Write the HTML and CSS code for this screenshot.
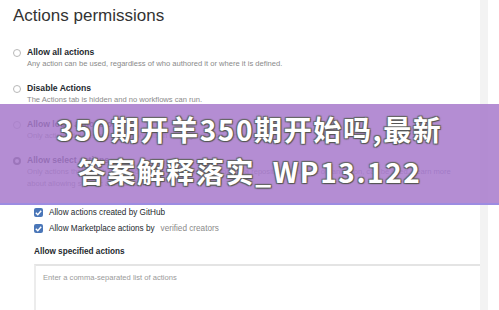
FILE: index.html
```html
<!doctype html>
<html>
<head>
    <meta charset="UTF-8">
    <link rel="stylesheet" href="styles.css">
</head>
<body>
    <div class="screen">
        <div class="content">
            <h1>Actions permissions</h1>
            <div class="option">
                <span class="radio"></span>
                <div>
                    <div class="label">Allow all actions</div>
                    <div class="note">Any action can be used, regardless of who authored it or where it is defined.</div>
                </div>
            </div>
            <div class="option">
                <span class="radio"></span>
                <div>
                    <div class="label">Disable Actions</div>
                    <div class="note">The Actions tab is hidden and no workflows can run.</div>
                </div>
            </div>
            <div class="option">
                <span class="radio"></span>
                <div>
                    <div class="label">Allow local actions only</div>
                    <div class="note">Only actions defined in a repository within the organization can be used.</div>
                </div>
            </div>
            <div class="option tall">
                <span class="radio checked"></span>
                <div>
                    <div class="label">Allow select actions</div>
                    <div class="note wide">Only actions that match specified criteria, plus actions defined in a repository within the organization, can be used. <span class="link">Learn more</span> about allowing specific actions to run.</div>
                </div>
            </div>
            <div class="sub">
                <div class="check"><span class="box">
                    <svg width="9" height="9" viewBox="0 0 10 10"><path d="M2 5.2 L4.2 7.4 L8 3" fill="none" stroke="#fff" stroke-width="1.6"/></svg>
                </span>Allow actions created by GitHub</div>
                <div class="check"><span class="box">
                    <svg width="9" height="9" viewBox="0 0 10 10"><path d="M2 5.2 L4.2 7.4 L8 3" fill="none" stroke="#fff" stroke-width="1.6"/></svg>
                </span>Allow Marketplace actions by <span class="muted">verified creators</span></div>
                <div class="label spec">Allow specified actions</div>
                <div class="area">Enter a comma-separated list of actions</div>
            </div>
        </div>
        <div class="scrollbar"></div>
    </div>
    <div class="banner">
        <p>350期开羊350期开始吗,最新</p>
        <p>答案解释落实_WP13.122</p>
    </div>
</body>
</html>
```

FILE: styles.css
```css
* {
    box-sizing: border-box;
}
body {
    margin: 0;
    background-color: #fff;
    font-family: "Liberation Sans", Arial, sans-serif;
    color: #24292e;
    overflow: hidden;
}

.screen {
    display: flex;
    height: 310px;
}

.content {
    width: 480px;
    padding: 6px 0 0 13px;
}

.scrollbar {
    width: 8px;
    background-color: #f3f3f3;
}

h1 {
    margin: 0 0 21px 0;
    font-size: 17px;
    font-weight: normal;
    color: #333;
}

.option {
    display: flex;
    gap: 6px;
    height: 36px;
}

.option.tall {
    height: 46px;
}

.radio {
    width: 8px;
    height: 8px;
    margin-top: 2px;
    border: 1px solid #b8b8b8;
    border-radius: 50%;
    flex: none;
}

.radio.checked {
    border: 2.5px solid #555;
}

.label {
    font-size: 8.6px;
    font-weight: bold;
    line-height: 12px;
    margin-top: -1px;
}

.note {
    font-size: 7.6px;
    color: #8a8a8a;
    line-height: 12px;
}

.note.wide {
    width: 430px;
}

.link {
    color: #7a7aa0;
}

.sub {
    padding-left: 21px;
    margin-top: 3px;
}

.check {
    display: flex;
    align-items: center;
    gap: 6px;
    font-size: 8.2px;
    height: 16px;
}

.box {
    width: 9px;
    height: 9px;
    border-radius: 2px;
    background-color: #4a76b8;
    display: flex;
}

.muted {
    color: #8a8a8a;
}

.spec {
    margin-top: 10px;
    font-size: 8.2px;
}

.area {
    margin-top: 6px;
    height: 60px;
    border-top: 2px solid #e4e4e4;
    border-left: 2px solid #ececec;
    padding: 7px 0 0 7px;
    font-size: 7.6px;
    color: #9a9a9a;
}

.banner {
    position: absolute;
    left: 0;
    top: 104px;
    width: 499px;
    height: 101px;
    background-color: rgba(168, 122, 204, 0.86);
    border-bottom: 2px solid rgba(150, 140, 230, 0.8);
    padding-top: 7px;
    text-align: center;
}

.banner p {
    margin: 0 0 6px 0;
    font-family: "Noto Sans CJK SC", sans-serif;
    font-weight: bold;
    font-size: 28px;
    line-height: 36px;
    letter-spacing: 1.6px;
    color: #fff;
    text-shadow: 1px 1px 1px #555, -1px -1px 1px #666, 1px -1px 1px #666, -1px 1px 1px #666;
}
```
